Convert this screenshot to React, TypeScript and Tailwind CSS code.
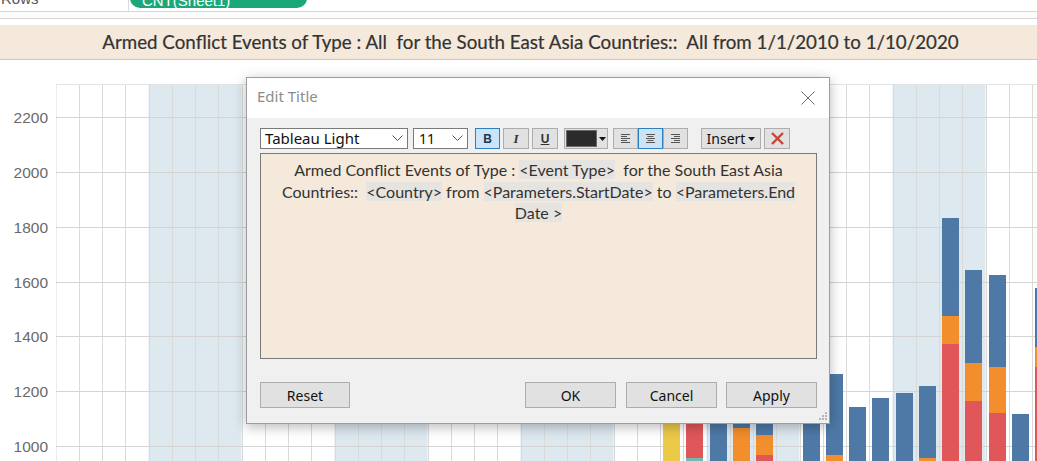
import React from 'react';

type Seg = { color: string; top: number };

const BLUE = '#4e79a7';
const ORANGE = '#f28e2b';
const RED = '#e15759';
const YELLOW = '#edc948';
const TEAL = '#76b7b2';

// chart geometry, page coordinates
const colX = (i: number) => 55.5 + 23.25 * i;
const PLOT_TOP = 84;
const BOTTOM = 461;
const ticks = [2200, 2000, 1800, 1600, 1400, 1200, 1000];
const yOf = (v: number) => 446 - (v - 1000) * (329 / 1200);
const bands = [4, 12, 20, 28, 36];

const bars: { col: number; segs: Seg[] }[] = [
    { col: 26, segs: [{ color: YELLOW, top: 395 }] },
    { col: 27, segs: [{ color: RED, top: 400 }, { color: TEAL, top: 458 }] },
    { col: 28, segs: [{ color: BLUE, top: 400 }] },
    { col: 29, segs: [{ color: BLUE, top: 400 }, { color: ORANGE, top: 428 }] },
    { col: 30, segs: [{ color: BLUE, top: 400 }, { color: ORANGE, top: 435 }, { color: RED, top: 455 }] },
    { col: 32, segs: [{ color: BLUE, top: 400 }] },
    { col: 33, segs: [{ color: BLUE, top: 374 }, { color: ORANGE, top: 455 }] },
    { col: 34, segs: [{ color: BLUE, top: 407 }] },
    { col: 35, segs: [{ color: BLUE, top: 398 }] },
    { col: 36, segs: [{ color: BLUE, top: 393 }] },
    { col: 37, segs: [{ color: BLUE, top: 386 }, { color: ORANGE, top: 458 }] },
    { col: 38, segs: [{ color: BLUE, top: 218 }, { color: ORANGE, top: 316 }, { color: RED, top: 344 }] },
    { col: 39, segs: [{ color: BLUE, top: 270 }, { color: ORANGE, top: 363 }, { color: RED, top: 401 }] },
    { col: 40, segs: [{ color: BLUE, top: 275 }, { color: ORANGE, top: 367 }, { color: RED, top: 413 }] },
    { col: 41, segs: [{ color: BLUE, top: 414 }] },
    { col: 42, segs: [{ color: BLUE, top: 288 }, { color: ORANGE, top: 347 }, { color: RED, top: 367 }] },
];

const Chart = () => (
    <svg width={1037} height={401} viewBox="0 60 1037 401" className="block">
        {bands.map((b) => (
            <rect key={b} x={colX(b)} y={PLOT_TOP} width={23.25 * 4} height={BOTTOM - PLOT_TOP} fill="#dde8ef" />
        ))}
        {Array.from({ length: 43 }).map((_, i) => (
            <line
                key={i}
                x1={Math.round(colX(i)) + 0.5}
                x2={Math.round(colX(i)) + 0.5}
                y1={PLOT_TOP}
                y2={BOTTOM}
                stroke={i === 0 ? '#ececec' : '#dadada'}
                strokeWidth={1}
            />
        ))}
        <line x1={56} x2={1037} y1={84.5} y2={84.5} stroke="#e3e3e3" />
        {ticks.map((t) => (
            <g key={t}>
                <line x1={56} x2={1037} y1={Math.round(yOf(t)) + 0.5} y2={Math.round(yOf(t)) + 0.5} stroke="#d4d4d4" />
                <text
                    x={48}
                    y={Math.round(yOf(t)) + 6}
                    textAnchor="end"
                    fill="#6a6a6a"
                    fontSize="15.5"
                    fontFamily="'Liberation Sans', Arial, sans-serif"
                >
                    {t}
                </text>
            </g>
        ))}
        {bars.map((b) =>
            b.segs.map((s, j) => {
                const next = b.segs[j + 1];
                const bottom = next ? next.top : BOTTOM;
                return (
                    <rect
                        key={`${b.col}-${j}`}
                        x={Math.round(colX(b.col)) + 3}
                        y={s.top}
                        width={17}
                        height={bottom - s.top}
                        fill={s.color}
                    />
                );
            })
        )}
    </svg>
);

const Chevron = () => (
    <svg width="11" height="7" viewBox="0 0 11 7">
        <polyline points="0.5,0.5 5.5,5.5 10.5,0.5" fill="none" stroke="#555" strokeWidth="1" />
    </svg>
);

const Caret = () => (
    <svg width="7" height="4" viewBox="0 0 7 4">
        <polygon points="0,0 7,0 3.5,4" fill="#111" />
    </svg>
);

const AlignIcon = ({ mode }: { mode: 'left' | 'center' | 'right' }) => {
    const rows = [9, 6, 9, 6, 9];
    return (
        <svg width="11" height="10" viewBox="0 0 11 10">
            {rows.map((w, i) => {
                const x = mode === 'left' ? 1 : mode === 'right' ? 10 - w : (11 - w) / 2;
                return <rect key={i} x={x} y={i * 2} width={w} height={1} fill="#555" />;
            })}
        </svg>
    );
};

const Token = ({ children }: { children: React.ReactNode }) => (
    <span className="bg-[#e6e4e1]">{children}</span>
);

const btnBase = 'h-[21px] flex items-center justify-center border';

const EditTitleDialog = () => (
    <div className="absolute left-[246px] top-[77px] w-[584px] h-[347px] border border-[#9d9d9d] bg-[#f0f0f0] shadow-[0_3px_12px_rgba(0,0,0,0.28)] flex flex-col font-['Noto_Sans',sans-serif]">
        {/* header */}
        <div className="h-[40px] bg-white flex items-center justify-between pl-[10px] pr-[14px] pb-[3px] shrink-0">
            <span className="text-[15px] text-[#8c8c8c]">Edit Title</span>
            <svg width="14" height="14" viewBox="0 0 14 14" className="mt-[3px]">
                <line x1="0.5" y1="0.5" x2="13.5" y2="13.5" stroke="#6e6e6e" strokeWidth="1" />
                <line x1="13.5" y1="0.5" x2="0.5" y2="13.5" stroke="#6e6e6e" strokeWidth="1" />
            </svg>
        </div>

        <div className="flex-1 pt-[10px] pl-[13px] pr-[12px] flex flex-col">
            {/* toolbar */}
            <div className="flex items-center h-[21px]">
                <div className="w-[148px] h-[21px] bg-white border border-[#7a7a7a] flex items-center justify-between pl-[4px] pr-[4px]">
                    <span className="text-[15px] leading-none text-[#111]">Tableau Light</span>
                    <Chevron />
                </div>
                <div className="ml-[5px] w-[55px] h-[21px] bg-white border border-[#7a7a7a] flex items-center justify-between pl-[5px] pr-[4px]">
                    <span className="text-[14px] leading-none text-[#111]">11</span>
                    <Chevron />
                </div>
                <div className={`${btnBase} ml-[7px] w-[25px] bg-[#cce4f7] border-[#2f7fc1]`}>
                    <span className="text-[12px] font-bold text-[#1e3550] font-['Liberation_Sans',sans-serif]">B</span>
                </div>
                <div className={`${btnBase} ml-[3px] w-[26px] bg-[#e1e1e1] border-[#adadad]`}>
                    <span className="text-[13px] font-bold italic text-[#333] font-['Liberation_Serif',serif]">I</span>
                </div>
                <div className={`${btnBase} ml-[3px] w-[26px] bg-[#e1e1e1] border-[#adadad]`}>
                    <span className="text-[12px] font-bold underline text-[#333] font-['Liberation_Sans',sans-serif]">U</span>
                </div>
                <div className={`${btnBase} ml-[6px] w-[44px] bg-[#e1e1e1] border-[#adadad] justify-start pl-[1px] gap-[2px]`}>
                    <div className="w-[31px] h-[17px] bg-[#2b2b2b] border border-[#6a6a6a]" />
                    <Caret />
                </div>
                <div className="ml-[5px] flex">
                    <div className={`${btnBase} w-[25px] bg-[#e1e1e1] border-[#adadad]`}>
                        <AlignIcon mode="left" />
                    </div>
                    <div className={`${btnBase} w-[25px] bg-[#cce4f7] border-[#2f7fc1]`}>
                        <AlignIcon mode="center" />
                    </div>
                    <div className={`${btnBase} w-[25px] bg-[#e1e1e1] border-[#adadad]`}>
                        <AlignIcon mode="right" />
                    </div>
                </div>
                <div className={`${btnBase} ml-[13px] w-[60px] bg-[#e1e1e1] border-[#adadad] gap-[3px]`}>
                    <span className="text-[14px] leading-none text-[#111]">Insert</span>
                    <Caret />
                </div>
                <div className={`${btnBase} ml-[3px] w-[26px] bg-[#e1e1e1] border-[#adadad]`}>
                    <svg width="13" height="13" viewBox="0 0 13 13">
                        <line x1="1" y1="1" x2="12" y2="12" stroke="#c4473a" strokeWidth="2.4" />
                        <line x1="12" y1="1" x2="1" y2="12" stroke="#c4473a" strokeWidth="2.4" />
                    </svg>
                </div>
            </div>

            {/* text area */}
            <div className="mt-[4px] h-[206px] bg-[#f4e9db] border border-[#7a7a7a] pt-[5px] px-[6px] text-center text-[16px] leading-[21.5px] text-[#333] font-['Lato',sans-serif]">
                Armed Conflict Events of Type : <Token>&lt;Event Type&gt;</Token>&nbsp; for the South East Asia
                <br />
                Countries::&nbsp; <Token>&lt;Country&gt;</Token> from <Token>&lt;Parameters.StartDate&gt;</Token> to{' '}
                <Token>&lt;Parameters.End</Token>
                <br />
                <Token>Date &gt;</Token>
            </div>

            {/* buttons */}
            <div className="mt-[23px] flex items-center">
                <button className="w-[90px] h-[26px] bg-[#e1e1e1] border border-[#adadad] text-[14px] text-[#111]">Reset</button>
                <div className="flex-1" />
                <button className="w-[91px] h-[26px] bg-[#e1e1e1] border border-[#adadad] text-[14px] text-[#111]">OK</button>
                <button className="ml-[10px] w-[91px] h-[26px] bg-[#e1e1e1] border border-[#adadad] text-[14px] text-[#111]">Cancel</button>
                <button className="ml-[9px] w-[91px] h-[26px] bg-[#e1e1e1] border border-[#adadad] text-[14px] text-[#111]">Apply</button>
            </div>
        </div>

        {/* resize grip */}
        <svg width="10" height="10" viewBox="0 0 10 10" className="absolute right-[2px] bottom-[2px]">
            {[
                [8, 0], [8, 3], [5, 3], [8, 6], [5, 6], [2, 6],
            ].map(([x, y], i) => (
                <rect key={i} x={x} y={y + 1} width={2} height={2} fill="#b4b4b4" />
            ))}
        </svg>
    </div>
);

export default function App() {
    return (
        <div className="relative w-[1037px] h-[461px] overflow-hidden bg-white">
            {/* shelf strip */}
            <div className="h-[11px] flex overflow-hidden">
                <div className="w-[129px] border-r border-[#dcdcdc] pl-[1px]">
                    <div className="-mt-[12px] text-[15px] text-[#555] font-['Liberation_Sans',sans-serif]">Rows</div>
                </div>
                <div className="ml-[1px] w-[177px] h-[20px] -mt-[12px] rounded-full bg-[#1ba878] pl-[12px]">
                    <span className="text-[15px] leading-[20px] text-white font-['Liberation_Sans',sans-serif]">CNT(Sheet1)</span>
                </div>
            </div>
            <div className="h-[7px] border-t border-[#d6d6d6] bg-[#fcfcfc]" />
            <div className="h-[7px] border-t border-[#d6d6d6]" />

            {/* title band */}
            <div className="h-[35px] bg-[#f4e9db] border-b border-[#c9c9c9] flex items-center justify-center pl-[24px]">
                <span className="text-[18.75px] text-[#333] font-['Lato',sans-serif] [-webkit-text-stroke:0.2px_#333]">
                    Armed Conflict Events of Type : All&nbsp; for the South East Asia Countries::&nbsp; All from 1/1/2010 to 1/10/2020
                </span>
            </div>

            <Chart />
            <EditTitleDialog />
        </div>
    );
}
